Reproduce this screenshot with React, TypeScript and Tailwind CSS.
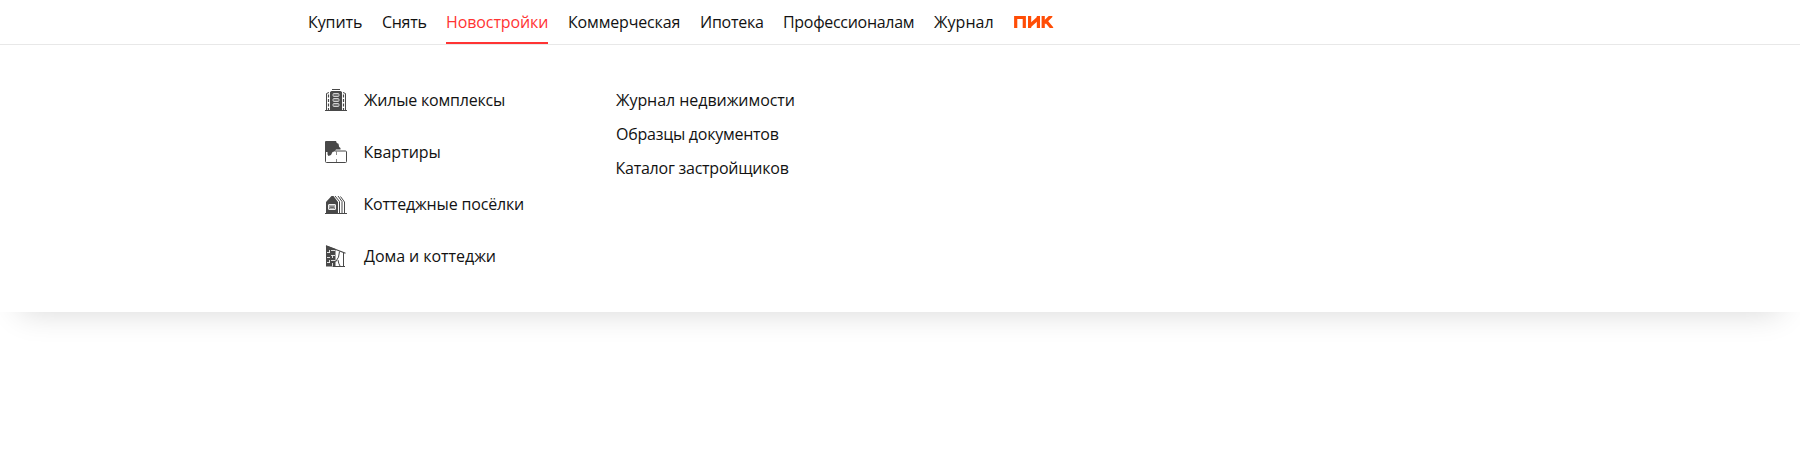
import type { ReactNode } from "react";

const nav = [
  { label: "Купить", cls: "w-[54px] tracking-[-0.1px]" },
  { label: "Снять", cls: "w-[44px] tracking-[-0.3px]" },
  { label: "Новостройки", cls: "w-[102px] tracking-[-0.1px]", active: true },
  { label: "Коммерческая", cls: "w-[112px] tracking-[-0.16px]" },
  { label: "Ипотека", cls: "w-[63px] tracking-[-0.25px]" },
  { label: "Профессионалам", cls: "w-[131px] tracking-[-0.3px]" },
  { label: "Журнал", cls: "w-[60px] tracking-[0.05px]" },
];

function Icon({ children }: { children: ReactNode }) {
  return (
    <svg width="22" height="24" viewBox="0 0 22 24" fill="none" stroke="#484848" className="shrink-0">
      {children}
    </svg>
  );
}

function ComplexIcon() {
  return (
    <Icon>
      <path d="M7 1.500h8" />
      <path d="M5 4 6.500 3h9L17 4V22H5z" fill="#484848" stroke="none" />
      <path d="M0 22.500h22M1.500 22V5.500L4 4.500M20.500 22V5.500L18 4.500" />
      <path d="M3.500 6.500V22M18.500 6.500V22" strokeDasharray="3 1.500" strokeWidth="1.200" />
      <g stroke="#d0d0d0" fill="#777">
        <rect x="8" y="5.500" width="6" height="3" rx="1" />
        <rect x="8" y="10.500" width="6" height="3" rx="1" />
        <rect x="8" y="15.500" width="6" height="3" rx="1" />
      </g>
    </Icon>
  );
}

function FlatIcon() {
  return (
    <Icon>
      <path d="M0 2q0-1 1-1h10l.8 2 1.700.700.7 3.300 1.300 1V9.500h-4.500L9.500 11.500l-2 .5-1.500 3-2.500 1-1-1.500V12H0z" fill="#484848" stroke="none" />
      <path d="M.5 11v10.500q0 1 1 1h19q1 0 1-1v-9.500q0-1-1-1H10" />
      <path d="M11.500 11v4M11.500 19v3" stroke="#888" />
    </Icon>
  );
}

function VillageIcon() {
  return (
    <Icon>
      <path d="M0 21.500h22" />
      <path d="M1 21.500V10l5.500-6h2L13 10v11.500z" fill="#484848" stroke="none" />
      <path d="m10 4 4.500 5.500v12M13 4l4 5.500v12M15.500 4.500l4 5.500v11" />
      <rect x="3.500" y="12.500" width="7" height="5" fill="#aaa" stroke="#eee" rx=".5" />
      <path d="m4.500 16.500 1.500-2 1 1.500 1-1.500 1.500 2" stroke="#555" strokeWidth=".900" />
    </Icon>
  );
}

function HouseIcon() {
  return (
    <Icon>
      <path d="M1 1.500 10.500 5v17.500H1z" fill="#484848" stroke="none" />
      <path d="m1 1.800 19.500 7.400" strokeWidth="1.200" />
      <path d="M18.500 9v13M8 22.500h12M14.500 7.500q0 6-4 10.500M13 16q.5 3.500 2 6" />
      <path d="M2 8.500h3M6 6.500h4M2 13.500h3M6 11.500h4M2 18.500h3M6 16.500h4M4.500 6v3M7.500 11v3M4.500 16v3M7.500 19v3" stroke="#eee" strokeWidth=".900" />
    </Icon>
  );
}

const categories = [
  { label: "Жилые комплексы", cls: "tracking-[-0.2px] ml-px", icon: <ComplexIcon /> },
  { label: "Квартиры", cls: "ml-[0.5px]", icon: <FlatIcon /> },
  { label: "Коттеджные посёлки", cls: "ml-[0.5px] tracking-[-0.18px]", icon: <VillageIcon /> },
  { label: "Дома и коттеджи", cls: "ml-px tracking-[-0.05px]", icon: <HouseIcon /> },
];

const links = [
  { label: "Журнал недвижимости", cls: "tracking-[-0.05px]" },
  { label: "Образцы документов", cls: "tracking-[-0.25px]" },
  { label: "Каталог застройщиков", cls: "tracking-[-0.24px] -ml-[0.5px]" },
];

export default function App() {
  return (
    <div className="min-h-[450px] overflow-hidden bg-white font-['Open_Sans','Noto_Sans',sans-serif] text-base leading-6 text-[#121212]">
      <header className="h-[45px] border-b border-[#e8e8e8] bg-white">
        <nav className="flex h-11 gap-5 pl-[308px]">
          {nav.map((item) => (
            <a
              key={item.label}
              className={`flex h-11 shrink-0 border-b-2 pt-[10px] whitespace-nowrap ${item.active ? "border-[#ff3333] text-[#ff3333]" : "border-transparent"} ${item.cls}`}
            >
              {item.label}
            </a>
          ))}
          <svg width="40" height="12" viewBox="0 0 40 12" className="mt-4 shrink-0" fill="none" stroke="#ff4d06" aria-label="ПИК">
            <path d="M1.700 12V1.500h8.600V12" strokeWidth="3.200" />
            <path d="M15.600 0v12M24.400 0v12" strokeWidth="3.200" />
            <path d="M15.500 10 24.500 2" strokeWidth="3.600" />
            <path d="M29.200 0v12" strokeWidth="3.200" />
            <path d="m30 7 7.500-7.500M32 5l6.200 7.500" strokeWidth="3.200" />
          </svg>
        </nav>
      </header>
      <section className="flex h-[267px] bg-white pt-[43px] pl-[325px] shadow-[0_20px_30px_-20px_rgba(0,0,0,0.16)]">
        <ul className="flex w-[291px] flex-col gap-7">
          {categories.map((item) => (
            <li key={item.label} className="flex h-6 gap-4 whitespace-nowrap">
              {item.icon}
              <span className={item.cls}>{item.label}</span>
            </li>
          ))}
        </ul>
        <ul className="flex flex-col gap-[10px]">
          {links.map((item) => (
            <li key={item.label} className={`whitespace-nowrap ${item.cls}`}>{item.label}</li>
          ))}
        </ul>
      </section>
    </div>
  );
}
